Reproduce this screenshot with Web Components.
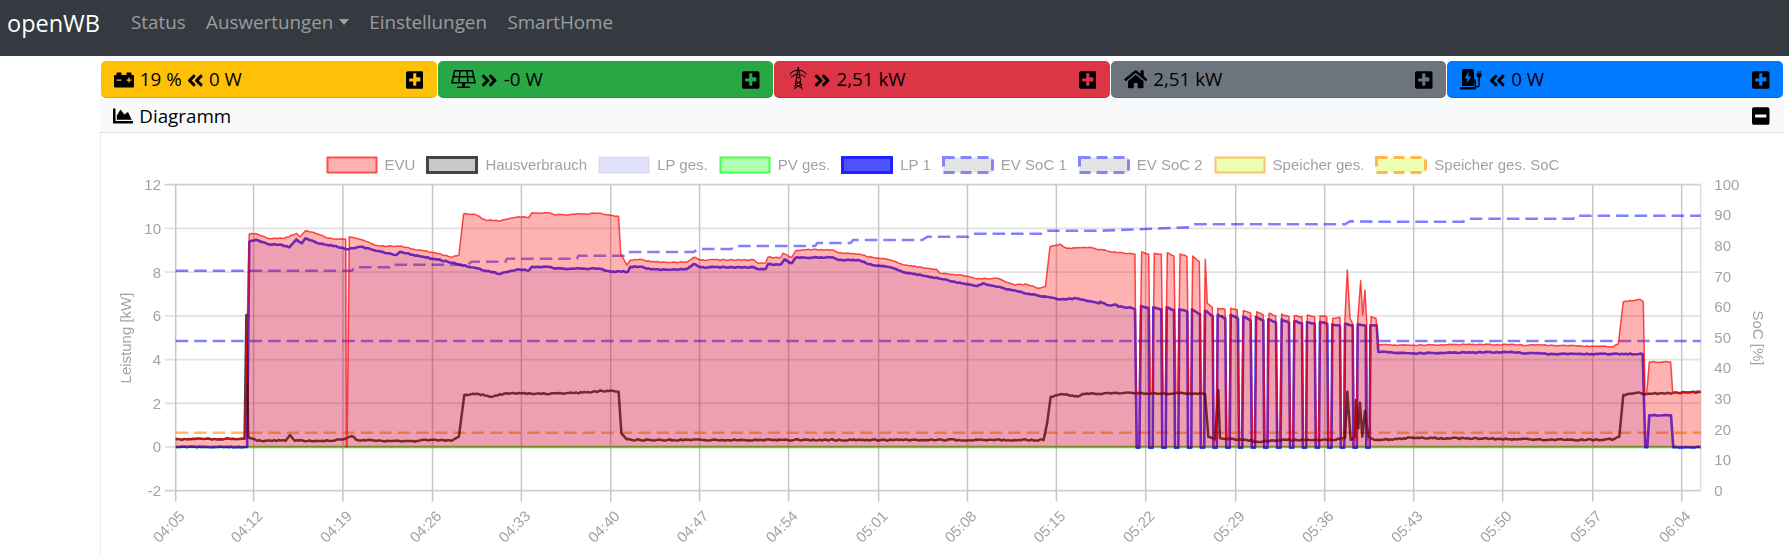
<!DOCTYPE html>
<html lang="de">
<head>
<meta charset="utf-8">
<title>openWB</title>
<style>
    html, body { margin: 0; background: #fff; overflow: hidden; }
    body { font-family: "Open Sans", "Noto Sans", sans-serif; font-size: 18.8px; color: #000; }
    .cards__div { display: flex; margin: 5px 5.4px 0 100.4px; }
    .panel__div { margin: 0 5.4px 0 100.4px; }
</style>
</head>
<body>
<app-navbar>
    <nav-link>Status</nav-link>
    <nav-link caret>Auswertungen</nav-link>
    <nav-link>Einstellungen</nav-link>
    <nav-link>SmartHome</nav-link>
</app-navbar>

<div class="cards__div">
    <status-card color="#ffc107"><fa-icon name="battery"></fa-icon> 19 % <fa-icon name="left"></fa-icon> 0 W</status-card>
    <status-card color="#28a745"><fa-icon name="solar"></fa-icon> <fa-icon name="right"></fa-icon> -0 W</status-card>
    <status-card color="#dc3545"><fa-icon name="tower"></fa-icon> <fa-icon name="right"></fa-icon> 2,51 kW</status-card>
    <status-card color="#6c757d"><fa-icon name="home"></fa-icon> 2,51 kW</status-card>
    <status-card color="#007bff"><fa-icon name="charger"></fa-icon> <fa-icon name="left"></fa-icon> 0 W</status-card>
</div>

<div class="panel__div">
    <chart-panel>
        <span slot="title"><fa-icon name="area"></fa-icon> Diagramm</span>
        <power-chart></power-chart>
    </chart-panel>
</div>

<script>
    (function appShell(customElements) {
        'use strict'

        const ICONS = {
            battery: { w: 20, h: 20, vb: '0 0 512 512', body: '<path d="M480 128h-32V80c0-8.84-7.16-16-16-16h-96c-8.84 0-16 7.16-16 16v48H192V80c0-8.84-7.16-16-16-16H80c-8.84 0-16 7.16-16 16v48H32c-17.67 0-32 14.33-32 32v256c0 17.67 14.33 32 32 32h448c17.67 0 32-14.33 32-32V160c0-17.67-14.33-32-32-32zM192 264c0 4.42-3.58 8-8 8H72c-4.42 0-8-3.58-8-8v-16c0-4.42 3.58-8 8-8h112c4.42 0 8 3.58 8 8v16zm256 0c0 4.42-3.58 8-8 8h-40v40c0 4.42-3.58 8-8 8h-16c-4.42 0-8-3.58-8-8v-40h-40c-4.42 0-8-3.58-8-8v-16c0-4.42 3.58-8 8-8h40v-40c0-4.42 3.58-8 8-8h16c4.42 0 8 3.58 8 8v40h40c4.42 0 8 3.58 8 8v16z"/>' },
            left: { w: 16.5, h: 19, vb: '0 0 448 512', body: '<path d="M223.7 239l136-136c9.4-9.4 24.6-9.4 33.9 0l22.6 22.6c9.4 9.4 9.4 24.6 0 33.9L319.9 256l96.4 96.4c9.4 9.4 9.4 24.6 0 33.9L393.7 409c-9.4 9.4-24.6 9.4-33.9 0l-136-136c-9.5-9.4-9.5-24.6-.1-34zm-192 34l136 136c9.4 9.4 24.6 9.4 33.9 0l22.6-22.6c9.4-9.4 9.4-24.6 0-33.9L127.9 256l96.4-96.4c9.4-9.4 9.4-24.6 0-33.9L201.7 103c-9.4-9.4-24.6-9.4-33.9 0l-136 136c-9.5 9.4-9.5 24.6-.1 34z"/>' },
            right: { w: 16.5, h: 19, vb: '0 0 448 512', body: '<path d="M224.3 273l-136 136c-9.4 9.4-24.6 9.4-33.9 0l-22.6-22.6c-9.4-9.4-9.4-24.6 0-33.9l96.4-96.4-96.4-96.4c-9.4-9.4-9.4-24.6 0-33.9L54.3 103c9.4-9.4 24.6-9.4 33.9 0l136 136c9.5 9.4 9.5 24.6.1 34zm192-34l-136-136c-9.4-9.4-24.6-9.4-33.9 0l-22.6 22.6c-9.4 9.4-9.4 24.6 0 33.9l96.4 96.4-96.4 96.4c-9.4 9.4-9.4 24.6 0 33.9l22.6 22.6c9.4 9.4 24.6 9.4 33.9 0l136-136c9.4-9.2 9.4-24.4 0-33.8z"/>' },
            home: { w: 23.5, h: 20.5, vb: '0 0 576 512', body: '<path d="M280.37 148.26L96 300.11V464a16 16 0 0 0 16 16l112.06-.29a16 16 0 0 0 15.92-16V368a16 16 0 0 1 16-16h64a16 16 0 0 1 16 16v95.64a16 16 0 0 0 16 16.05L464 480a16 16 0 0 0 16-16V300L295.67 148.26a12.19 12.19 0 0 0-15.3 0zM571.6 251.47L488 182.56V44.05a12 12 0 0 0-12-12h-56a12 12 0 0 0-12 12v72.61L318.47 43a48 48 0 0 0-61 0L4.34 251.47a12 12 0 0 0-1.6 16.9l25.5 31A12 12 0 0 0 45.15 301l235.22-193.74a12.19 12.19 0 0 1 15.3 0L530.9 301a12 12 0 0 0 16.9-1.6l25.5-31a12 12 0 0 0-1.7-16.93z"/>' },
            area: { w: 20, h: 20, vb: '0 0 512 512', body: '<path d="M500 384c6.6 0 12 5.4 12 12v40c0 6.6-5.4 12-12 12H12c-6.6 0-12-5.4-12-12V76c0-6.6 5.4-12 12-12h40c6.6 0 12 5.4 12 12v308h436zM372.7 159.5L288 216l-85.3-113.7c-5.1-6.8-15.5-6.3-19.9 1L96 248v104h384l-89.9-187.8c-3.2-6.5-11.4-8.7-17.4-4.7z"/>' },
            plus: { w: 17.5, h: 20, vb: '0 0 448 512', body: '<path d="M400 32H48C21.5 32 0 53.5 0 80v352c0 26.5 21.5 48 48 48h352c26.5 0 48-21.5 48-48V80c0-26.5-21.5-48-48-48zm-32 252c0 6.6-5.4 12-12 12h-92v92c0 6.6-5.4 12-12 12h-56c-6.6 0-12-5.4-12-12v-92H92c-6.6 0-12-5.4-12-12v-56c0-6.6 5.4-12 12-12h92V92c0-6.6 5.4-12 12-12h56c6.6 0 12 5.4 12 12v92h92c6.6 0 12 5.4 12 12v56z"/>' },
            minus: { w: 17.5, h: 20, vb: '0 0 448 512', body: '<path d="M400 32H48C21.5 32 0 53.5 0 80v352c0 26.5 21.5 48 48 48h352c26.5 0 48-21.5 48-48V80c0-26.5-21.5-48-48-48zM92 296c-6.6 0-12-5.4-12-12v-56c0-6.6 5.4-12 12-12h264c6.6 0 12 5.4 12 12v56c0 6.6-5.4 12-12 12H92z"/>' },
            solar: { w: 25, h: 19.5, vb: '0 0 25 19.5', body: '<g fill="none" stroke="#000" stroke-width="1.5"><path d="M3.6.8h17.8l2.6 12H1z"/><path d="M1.9 6.8h21.2M9 .8l-1 12M16 .8l1 12"/></g><path d="M11 13h3v3.4h-3zM7 16.6h11q1 0 1 1.4H6q0-1.4 1-1.4z"/>' },
            tower: { w: 16.5, h: 22.5, gap: '0 2.5px 0 3px', vb: '0 0 16.5 22.5', body: '<g fill="none" stroke="#000" stroke-width="1"><path d="M8.25 .2L4.6 22.3M8.25 .2l3.65 22.1M.6 6.2q3-3 7.65-3t7.65 3M1 10.4q3-3 7.25-3t7.25 3M6.6 10.6h3.4M6 14l5 3.6M10.5 14l-5 3.6M5 21l6.5-3.6M11.5 21l-6.5-3.6M.6 6.2v1.4M15.9 6.2v1.4"/></g>' },
            charger: { w: 22.5, h: 20.5, vb: '0 0 22.5 20.5', body: '<path fill-rule="evenodd" d="M2 2.2A2.2 2.2 0 0 1 4.2 0h7.6A2.2 2.2 0 0 1 14 2.2V17H2zM8.8 2.5L4.6 9.6h3l-1.2 5 4.8-7H8.2z"/><rect x="0" y="18" width="16" height="2.5" rx=".8"/><path d="M16.6 4.4h4.9v1.8q0 2-1.7 2.5v7q0 2.8-2.7 2.8T14.4 16v-3.2q0-1.8-1.4-1.8v-1.5q3 0 3 3.3V16q0 1.2 1.1 1.2T18.3 16V8.7q-1.7-.5-1.7-2.5zM17.5 2h1v2.4h-1zM19.6 2h1v2.4h-1z"/>' }
        };

        class FaIcon extends HTMLElement {
            connectedCallback() {
                const icon = ICONS[this.getAttribute('name')];
                const shadowRoot = this.attachShadow({ mode: 'open' });
                shadowRoot.innerHTML = `
                    <style>
                        :host { display: inline-block; vertical-align: -.2em; line-height: 0; margin: ${icon.gap || '0 1px 0 0'}; }
                        svg { display: block; fill: #000; }
                    </style>
                    <svg width="${icon.w}" height="${icon.h}" viewBox="${icon.vb}">${icon.body}</svg>`;
            }
        }

        class AppNavbar extends HTMLElement {
            constructor() {
                super();
                this.attachShadow({ mode: 'open' }).innerHTML = `
                    <style>
                        :host { display: flex; height: 56px; background: #343a40; box-sizing: border-box; padding: 5px 0 0 7px; }
                        .brand__span { color: #fff; font-size: 23.5px; line-height: 36px; margin-right: 31px; }
                        .links__div { display: flex; gap: 20.5px; line-height: 36px; margin-top: -1.5px; }
                    </style>
                    <span class="brand__span">openWB</span>
                    <div class="links__div"><slot></slot></div>`;
            }
        }

        class NavLink extends HTMLElement {
            constructor() {
                super();
                this.attachShadow({ mode: 'open' }).innerHTML = `
                    <style>
                        :host { display: block; color: rgba(255, 255, 255, .5); }
                        .caret__i { display: inline-block; margin-left: 5.5px; vertical-align: 4px; border-top: 6px solid; border-left: 5.5px solid transparent; border-right: 5.5px solid transparent; }
                    </style>
                    <slot></slot>${this.hasAttribute('caret') ? '<i class="caret__i"></i>' : ''}`;
            }
        }

        class StatusCard extends HTMLElement {
            constructor() {
                super();
                this.attachShadow({ mode: 'open' }).innerHTML = `
                    <style>
                        :host { flex: 1 1 0; display: flex; align-items: center; justify-content: space-between; box-sizing: border-box; height: 37px; padding: 0 12.5px 0 13px; border-radius: 5px; border-bottom: 1px solid rgba(0, 0, 0, .125); margin: 0 .5px; }
                        .toggle__div { color: #000; }
                    </style>
                    <div><slot></slot></div>
                    <div class="toggle__div"><fa-icon name="plus"></fa-icon></div>`;
                this.style.background = this.getAttribute('color');
            }
        }

        class ChartPanel extends HTMLElement {
            constructor() {
                super();
                this.attachShadow({ mode: 'open' }).innerHTML = `
                    <style>
                        :host { display: block; }
                        .head__div { display: flex; align-items: center; justify-content: space-between; box-sizing: border-box; height: 35px; padding: 1px 13px 0 13px; background: #f8f9fa; border-bottom: 1px solid #dcdfe2; }
                        .body__div { border-left: 1px solid #eee; }
                    </style>
                    <div class="head__div"><slot name="title"></slot><fa-icon name="minus"></fa-icon></div>
                    <div class="body__div"><slot></slot></div>`;
            }
        }

        // page pixels of the plot area
        const PLOT = { left: 175.7, right: 1700.7, top: 184.7, bottom: 490.7, zero: 447 };
        const KW_STEP = 43.71;
        const SOC_STEP = 30.6;
        const TIMES = [['04:05', 175.7], ['04:12', 253.6], ['04:19', 342.9], ['04:26', 432.5], ['04:33', 521.4], ['04:40', 610.7],
            ['04:47', 699.6], ['04:54', 788.6], ['05:01', 878.6], ['05:08', 967.5], ['05:15', 1056.4], ['05:22', 1145.7],
            ['05:29', 1235.7], ['05:36', 1324.7], ['05:43', 1413.7], ['05:50', 1502.7], ['05:57', 1592.7], ['06:04', 1681.7]];

        // traced from the reference in four stretches, each with its own scale
        const crop = (ox, sx, oy, sy, from, to) => flat => {
            const out = [];
            for (let i = 0; i < flat.length; i += 2) {
                const x = ox + flat[i] / sx;
                if (x >= from && x < to) out.push([x, oy + flat[i + 1] / sy]);
            }
            return out;
        };
        const a = crop(100, 2.8, 170, 3, 0, 640);
        const b = crop(640, 2.8, 170, 3, 640, 1100);
        const c = crop(1100, 3, 220, 3, 1100, 1380);
        const d = crop(1380, 3, 170, 3, 1380, 9999);

        // pulses during the phase-switching test: tops joined by short dips
        function pulses(tops, lowAt, halfWidth) {
            const flat = [];
            tops.forEach((top, i) => {
                if (i > 0) {
                    const prev = tops[i - 1][tops[i - 1].length - 2];
                    const mid = (prev + top[0]) / 2;
                    const low = lowAt(mid);
                    flat.push(mid - halfWidth, low, mid + halfWidth, low);
                }
                flat.push(...top);
            });
            return flat;
        }

        const LP_TOPS = [[123, 258, 146, 265], [160, 262, 184, 268], [200, 262, 222, 270], [238, 268, 262, 275], [276, 268, 300, 282], [315, 272, 338, 288],
            [353, 284, 376, 295], [392, 284, 414, 296], [430, 290, 452, 302], [468, 290, 490, 302], [505, 298, 528, 308], [545, 298, 567, 308],
            [583, 304, 606, 310], [621, 306, 644, 312], [660, 306, 682, 312], [697, 313, 720, 318], [735, 311, 758, 316], [773, 313, 797, 318], [811, 316, 830, 316]];
        const EVU_TOPS = [[125, 95, 146, 103], [163, 100, 184, 103], [202, 98, 222, 108], [240, 102, 261, 110], [278, 108, 298, 125], [316, 118, 322, 250, 337, 262],
            [353, 265, 375, 268], [392, 265, 412, 270], [430, 272, 452, 280], [470, 275, 490, 285], [507, 280, 527, 288], [545, 282, 567, 290],
            [583, 288, 606, 290], [622, 285, 644, 290], [660, 288, 680, 290], [698, 295, 720, 292], [735, 295, 742, 150, 750, 295, 758, 312],
            [773, 300, 782, 182, 788, 285, 795, 210, 800, 305], [813, 290, 828, 295]];

        const EVU = [
            ...a([212, 808, 405, 806, 418, 192, 440, 192, 470, 205, 510, 205, 530, 200, 550, 190, 560, 200, 575, 182, 610, 192, 640, 205, 688, 208, 690, 831, 692, 831, 698, 200, 740, 212, 780, 228, 840, 228, 890, 240, 940, 248, 985, 262, 1005, 255, 1018, 132, 1045, 132, 1080, 150, 1120, 153, 1170, 140, 1200, 143, 1210, 128, 1255, 128, 1275, 135, 1400, 130, 1452, 140, 1458, 250, 1475, 285, 1485, 270, 1512, 270]),
            ...b([0, 268, 30, 275, 130, 277, 150, 262, 170, 270, 320, 270, 330, 280, 352, 278, 358, 262, 395, 262, 400, 250, 425, 262, 435, 243, 470, 238, 540, 240, 555, 248, 610, 252, 650, 262, 700, 270, 740, 285, 830, 298, 840, 310, 900, 316, 945, 326, 1000, 325, 1050, 345, 1080, 342, 1115, 355, 1135, 350, 1148, 230, 1175, 222, 1195, 235, 1260, 232, 1287, 240]),
            ...c([0, 88, 50, 98, 90, 100, 105, 103, 108, 518, 118, 518, ...pulses(EVU_TOPS, x => x < 316 ? 518 : 660, 3), 835, 373, 900, 372]),
            ...d([0, 525, 100, 525, 140, 525, 300, 523, 500, 526, 700, 530, 715, 522, 730, 395, 780, 388, 790, 395, 795, 670, 800, 670, 808, 576, 872, 576, 878, 668, 962, 665])
        ];
        const LP1 = [
            ...a([212, 831, 405, 831, 412, 831, 418, 215, 440, 210, 470, 222, 510, 225, 530, 232, 550, 208, 565, 220, 575, 205, 610, 220, 660, 228, 690, 238, 710, 235, 730, 230, 780, 243, 830, 255, 840, 245, 900, 260, 945, 268, 985, 278, 1040, 292, 1120, 312, 1170, 298, 1200, 302, 1210, 290, 1255, 290, 1275, 296, 1400, 296, 1430, 305, 1478, 305, 1485, 290, 1512, 292]),
            ...b([0, 290, 30, 298, 130, 298, 150, 282, 170, 292, 320, 292, 335, 298, 352, 297, 358, 283, 395, 283, 405, 268, 425, 280, 435, 263, 540, 262, 555, 270, 610, 270, 650, 285, 700, 292, 745, 308, 800, 318, 835, 325, 900, 340, 945, 348, 960, 340, 1000, 350, 1060, 365, 1120, 378, 1180, 388, 1220, 385, 1287, 400]),
            ...c([0, 245, 20, 255, 50, 255, 55, 260, 90, 262, 105, 268, 110, 683, 118, 683, ...pulses(LP_TOPS, () => 683, 5), 835, 396, 900, 400]),
            ...d([0, 546, 100, 550, 368, 546, 500, 552, 788, 552, 796, 832, 802, 832, 808, 736, 873, 736, 880, 832, 962, 832])
        ];
        const HOUSE = [
            ...a([212, 808, 405, 806, 410, 435, 415, 800, 440, 812, 520, 812, 532, 795, 545, 812, 640, 812, 690, 805, 705, 798, 720, 810, 880, 815, 900, 810, 985, 812, 1005, 800, 1020, 675, 1060, 672, 1090, 680, 1140, 670, 1250, 672, 1350, 668, 1420, 662, 1452, 665, 1460, 790, 1475, 808, 1512, 810]),
            ...b([0, 810, 1130, 810, 1140, 760, 1150, 680, 1180, 672, 1225, 680, 1240, 672, 1287, 672]),
            ...c([0, 522, 50, 518, 100, 520, 300, 520, 315, 522, 325, 650, 345, 658, 355, 510, 360, 655, 440, 660, 470, 665, 560, 660, 700, 660, 735, 655, 742, 515, 752, 660, 765, 650, 768, 540, 775, 625, 780, 548, 787, 650, 795, 572, 805, 650, 820, 658, 900, 657]),
            ...d([0, 810, 100, 803, 200, 805, 300, 806, 600, 810, 700, 808, 718, 800, 730, 675, 770, 668, 800, 672, 962, 666])
        ];
        const SOC1 = [
            ...a([212, 302, 705, 302, 712, 292, 810, 292, 815, 284, 1030, 284, 1040, 275, 1135, 275, 1140, 266, 1335, 266, 1340, 257, 1470, 257, 1478, 246, 1512, 246]),
            ...b([0, 246, 150, 246, 165, 237, 255, 237, 268, 228, 490, 228, 497, 219, 590, 219, 597, 210, 790, 210, 805, 200, 920, 200, 935, 191, 1130, 191, 1142, 182, 1287, 182]),
            ...c([0, 32, 270, 22, 285, 13, 735, 13, 750, 4, 840, 4]),
            ...d([0, 155, 250, 155, 262, 146, 580, 146, 585, 137, 962, 137])
        ];

        const noise = (x, seed) => {
            const v = Math.sin(Math.floor(x / 2.14) * 12.9898 + seed) * 43758.5453;
            return v - Math.floor(v) - .5;
        };

        // the recording has a sample every 10 s, so give long stretches some grain
        function sampled(points, seed, amp) {
            const out = [];
            points.forEach((p, i) => {
                out.push(p);
                const next = points[i + 1];
                if (!next) return;
                const dx = next[0] - p[0];
                if (dx < 4 || Math.abs(next[1] - p[1]) > dx) return;
                for (let x = p[0] + 2.14; x < next[0] - 1; x += 2.14) {
                    const y = p[1] + (next[1] - p[1]) * (x - p[0]) / dx;
                    out.push([x, y + noise(x, seed) * amp]);
                }
            });
            return out;
        }

        const toPath = points => 'M' + points.map(p => p[0].toFixed(1) + ' ' + p[1].toFixed(1)).join('L');
        const toArea = points => toPath(points) + `L${points[points.length - 1][0].toFixed(1)} ${PLOT.zero}L${points[0][0].toFixed(1)} ${PLOT.zero}Z`;

        const LEGEND = [
            { label: 'EVU', stroke: '#ff4d4d', fill: '#ffb0b0', width: 2 },
            { label: 'Hausverbrauch', stroke: '#444', fill: '#c8c8c8', width: 3 },
            { label: 'LP ges.', stroke: '#dcdcf6', fill: '#e2e2fc', width: 2 },
            { label: 'PV ges.', stroke: '#4dff4d', fill: '#b0ffb0', width: 2 },
            { label: 'LP 1', stroke: '#2222ff', fill: '#5050ff', width: 3 },
            { label: 'EV SoC 1', stroke: '#8484ff', fill: '#e4e4e4', width: 3, dash: true },
            { label: 'EV SoC 2', stroke: '#8484ff', fill: '#e4e4e4', width: 3, dash: true },
            { label: 'Speicher ges.', stroke: '#ffc266', fill: '#ecffb0', width: 2 },
            { label: 'Speicher ges. SoC', stroke: '#ffb84d', fill: '#ecffb0', width: 3, dash: true }
        ];

        class PowerChart extends HTMLElement {
            constructor() {
                super();
                const legend = LEGEND.map(item => `
                    <div class="legend__item">
                        <svg width="52" height="18" viewBox="0 0 52 18"><rect x="1.5" y="1.5" width="49" height="15" fill="${item.fill}" stroke="${item.stroke}" stroke-width="${item.width}" ${item.dash ? 'stroke-dasharray="11 6"' : ''}/></svg>
                        <span>${item.label}</span>
                    </div>`).join('');
                this.attachShadow({ mode: 'open' }).innerHTML = `
                    <style>
                        :host { display: block; font-family: "Liberation Sans", Arial, sans-serif; color: #a3a3a3; filter: blur(.45px); }
                        .legend__div { display: flex; justify-content: center; gap: 11px; height: 41px; padding-top: 23px; box-sizing: border-box; font-size: 15px; line-height: 18px; }
                        .legend__item { display: flex; align-items: center; gap: 7px; }
                        svg { display: block; }
                        text { fill: #a3a3a3; font-size: 15px; }
                    </style>
                    <div class="legend__div">${legend}</div>
                    <svg width="1683" height="383" viewBox="101 174 1683 383">${this._plot()}</svg>`;
            }

            _plot() {
                const { left, right, top, bottom, zero } = PLOT;
                let grid = '';
                let labels = '';
                for (let i = 0; i <= 7; i++) {
                    const y = top + i * KW_STEP;
                    const edge = i === 0 || i === 7;
                    grid += `<path d="M${left - 11} ${y}H${right}" stroke="${edge ? '#cfcfcf' : '#e2e2e2'}" stroke-width="1.8"/>`;
                    labels += `<text x="161" y="${y + 5.5}" text-anchor="end">${12 - i * 2}</text>`;
                }
                for (let i = 0; i <= 10; i++) {
                    labels += `<text x="1714.3" y="${top + i * SOC_STEP + 5}">${100 - i * 10}</text>`;
                }
                TIMES.forEach(([label, x]) => {
                    grid += `<path d="M${x} ${top}V${bottom + 11}" stroke="#c6c6c6" stroke-width="1.5"/>`;
                    labels += `<text transform="translate(${x + 10} 517) rotate(-45)" text-anchor="end">${label}</text>`;
                });
                grid += `<path d="M${right} ${top}V${bottom}" stroke="#ddd" stroke-width="1.5"/>`;
                labels += `<text transform="translate(131 338) rotate(-90)" text-anchor="middle">Leistung [kW]</text>`;
                labels += `<text transform="translate(1753 338) rotate(90)" text-anchor="middle">SoC [%]</text>`;

                const evu = sampled(EVU, 1.3, 1.1);
                const lp = sampled(LP1, 1.3, 1.1);
                const house = sampled(HOUSE, 4.7, 1.4);
                const soc = 'fill="none" stroke-width="2.6" stroke-dasharray="12.5 6"';

                return `
                    ${grid}
                    <path d="${toPath(SOC1)}" ${soc} stroke="rgba(0, 0, 255, .5)"/>
                    <path d="M${left} 341H${right}" ${soc} stroke="rgba(0, 0, 255, .5)"/>
                    <path d="M${left} 432.7H${right}" ${soc} stroke="rgba(255, 140, 0, .6)"/>
                    <path d="M${left} ${zero}H${right}" fill="none" stroke="rgba(40, 210, 0, .8)" stroke-width="2.6"/>
                    <path d="${toArea(lp)}" fill="rgba(0, 0, 255, .1)"/>
                    <path d="${toPath(lp)}" fill="none" stroke="rgba(0, 0, 255, .78)" stroke-width="2.6" stroke-linejoin="round"/>
                    <path d="${toPath(house)}" fill="none" stroke="rgba(0, 0, 0, .75)" stroke-width="2.5" stroke-linejoin="round"/>
                    <path d="${toArea(evu)}" fill="rgba(255, 0, 0, .3)"/>
                    <path d="${toPath(evu)}" fill="none" stroke="rgba(255, 0, 0, .7)" stroke-width="1.5" stroke-linejoin="round"/>
                    ${labels}`;
            }
        }

        customElements.define('fa-icon', FaIcon);
        customElements.define('app-navbar', AppNavbar);
        customElements.define('nav-link', NavLink);
        customElements.define('status-card', StatusCard);
        customElements.define('chart-panel', ChartPanel);
        customElements.define('power-chart', PowerChart);

    })(window.customElements);
</script>
</body>
</html>
